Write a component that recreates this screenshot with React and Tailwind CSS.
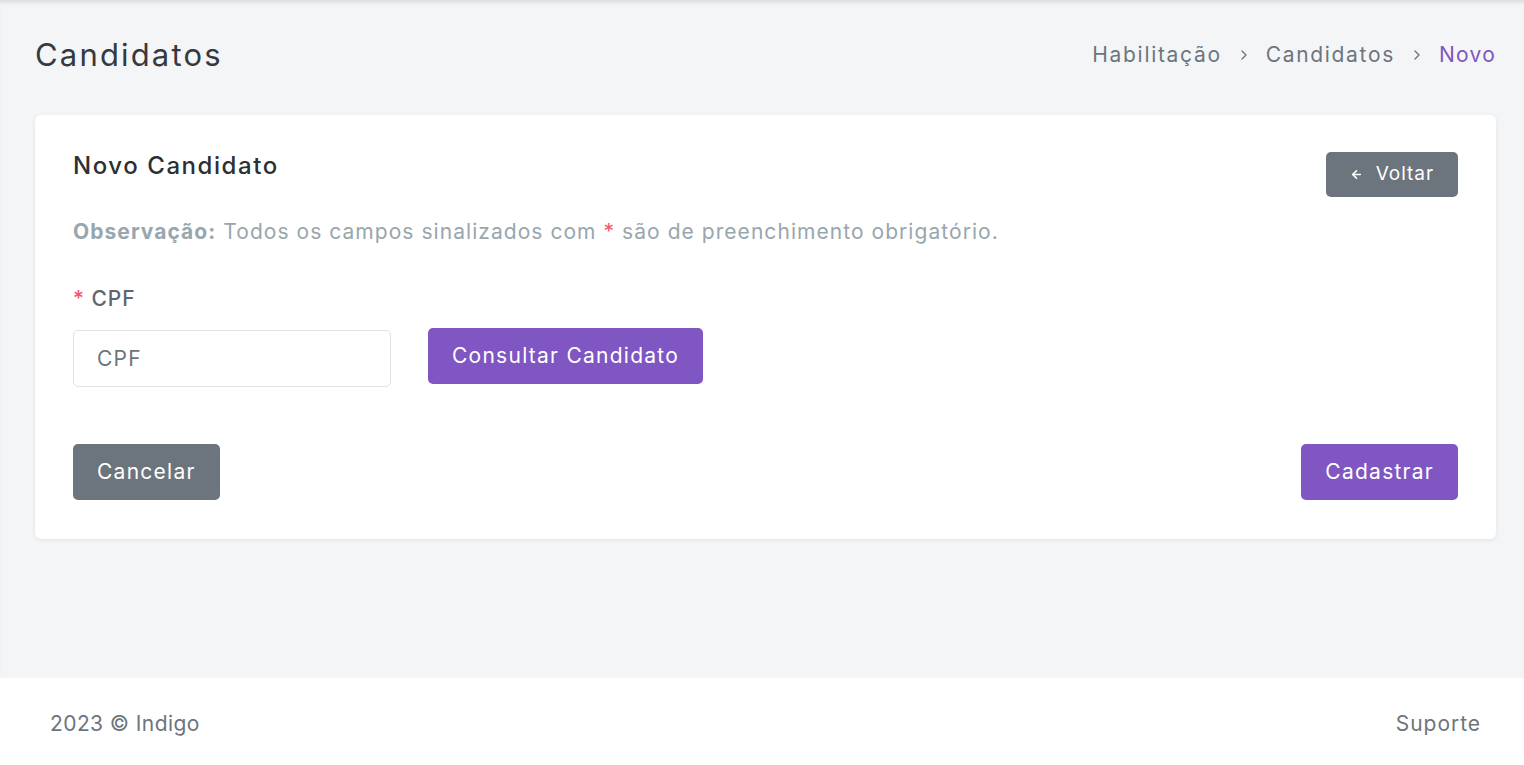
import React from "react";
import { ArrowLeft, ChevronRight } from "lucide-react";

export default function App() {
  return (
    <div
      className="min-h-screen flex flex-col bg-[#f4f5f7] text-[#6c757d] tracking-[0.06em]"
      style={{ fontFamily: "Inter, 'Open Sans', sans-serif" }}
    >
      <main className="flex-1 pl-[35px] pr-[28px] shadow-[inset_0_5px_5px_-3px_rgba(0,0,0,0.12)]">
        <div className="pt-[30px] h-[80px] flex items-center justify-between mb-[35px]">
          <h1 className="text-[31px] leading-[50px] text-[#343a40] font-normal tracking-[0.07em]">Candidatos</h1>
          <nav className="flex items-center text-[21px] text-[#6c757d] tracking-[0.08em]">
            <span>Habilitação</span>
            <ChevronRight size={16} strokeWidth={2} className="mx-[14px] text-[#6c757d]" />
            <span>Candidatos</span>
            <ChevronRight size={16} strokeWidth={2} className="mx-[14px] text-[#6c757d]" />
            <span className="text-[#7f56c2] tracking-[0.06em]">Novo</span>
          </nav>
        </div>

        <section className="bg-white rounded-[6px] shadow-[0_1px_4px_rgba(0,0,0,0.08)] pt-[37px] pb-[39px] pl-[38px] pr-[38px]">
          <div className="flex items-start justify-between">
            <h2 className="text-[24px] leading-[28px] text-[#2b3035] font-medium tracking-[0.065em]">Novo Candidato</h2>
            <button className="h-[45px] px-[24px] rounded-[5px] bg-[#6c757d] text-white text-[19px] flex items-center gap-[13px]">
              <ArrowLeft size={13} strokeWidth={3} />
              <span>Voltar</span>
            </button>
          </div>

          <p className="mt-[20px] text-[21px] leading-[30px] text-[#98a6ad] tracking-[0.05em]">
            <span className="font-bold">Observação:</span> Todos os campos sinalizados com{" "}
            <span className="text-[#f1556c]">*</span> são de preenchimento obrigatório.
          </p>

          <label className="block mt-[37px] text-[21px] leading-[30px] text-[#5f666c] font-medium">
            <span className="text-[#f1556c]">*</span> CPF
          </label>

          <div className="mt-[16px] flex items-start gap-[37px]">
            <input
              type="text"
              placeholder="CPF"
              className="w-[318px] h-[57px] rounded-[5px] border border-[#dee2e6] px-[23px] text-[21px] tracking-[0.06em] text-[#6c757d] placeholder:text-[#6c757d] outline-none"
            />
            <button className="-mt-[2px] h-[56px] px-[24px] rounded-[5px] bg-[#7f56c2] text-white text-[21px] tracking-[0.06em]">
              Consultar Candidato
            </button>
          </div>

          <div className="mt-[57px] flex items-center justify-between">
            <button className="h-[56px] px-[24px] rounded-[5px] bg-[#6c757d] text-white text-[21px] tracking-[0.06em]">Cancelar</button>
            <button className="h-[56px] px-[24px] rounded-[5px] bg-[#7f56c2] text-white text-[21px] tracking-[0.06em]">Cadastrar</button>
          </div>
        </section>
      </main>

      <footer className="h-[87px] pt-[5px] bg-white flex items-center justify-between pl-[50px] pr-[43px] text-[21px] text-[#6c757d]">
        <span className="tracking-[0.02em]">2023 © Indigo</span>
        <span>Suporte</span>
      </footer>
    </div>
  );
}
